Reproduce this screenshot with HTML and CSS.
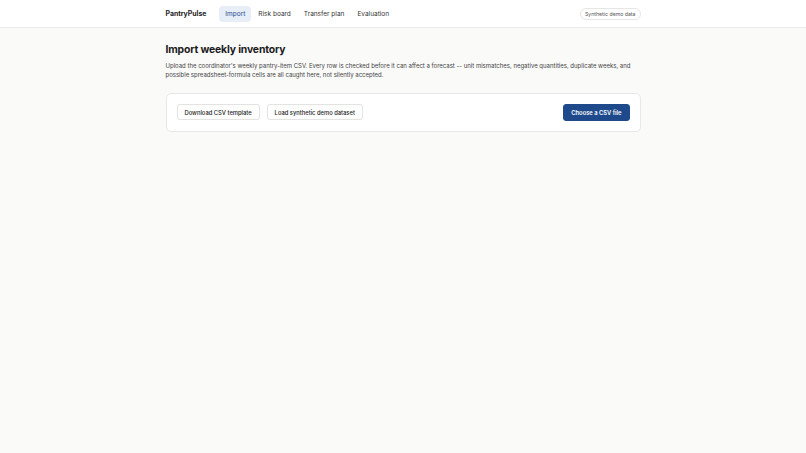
FILE: index.html
```html
<!DOCTYPE html>
<html lang="en">
<head>
    <meta charset="UTF-8">
    <meta name="viewport" content="width=device-width, initial-scale=1.0">
    <title>PantryPulse - Import</title>
    <link rel="stylesheet" href="styles.css">
</head>
<body>
<header class="topbar">
    <div class="topbar-inner">
        <div class="brand">PantryPulse</div>
        <nav class="nav">
            <a class="nav-link active" href="#">Import</a>
            <a class="nav-link" href="#">Risk board</a>
            <a class="nav-link" href="#">Transfer plan</a>
            <a class="nav-link" href="#">Evaluation</a>
        </nav>
        <span class="badge">Synthetic demo data</span>
    </div>
</header>

<main class="container">
    <h1 class="title">Import weekly inventory</h1>
    <p class="lead">Upload the coordinator's weekly pantry-item CSV. Every row is checked before it can affect a forecast -- unit mismatches, negative quantities, duplicate weeks, and possible spreadsheet-formula cells are all caught here, not silently accepted.</p>

    <div class="card">
        <div class="card-actions">
            <button class="btn">Download CSV template</button>
            <button class="btn">Load synthetic demo dataset</button>
        </div>
        <button class="btn btn-primary">Choose a CSV file</button>
    </div>
</main>
</body>
</html>
```

FILE: styles.css
```css
body {
    font-family: Inter, "Noto Sans", sans-serif;
    margin: 0;
    padding: 0;
    background-color: #fafaf9;
    color: #1c1c1c;
}

.topbar {
    background: #fff;
    border-bottom: 1px solid #ebebea;
}

.topbar-inner {
    width: 475px;
    margin: 0 auto;
    height: 27px;
    display: flex;
    align-items: center;
}

.brand {
    font-weight: 700;
    font-size: 6.9px;
    margin-right: 13px;
}

.nav {
    display: flex;
    gap: 1px;
}

.nav-link {
    font-size: 6.5px;
    color: #333;
    text-decoration: none;
    padding: 4px 6px;
    border-radius: 4px;
    line-height: 8px;
}

.nav-link.active {
    background: #e8eef8;
    color: #1e4a8c;
}

.badge {
    margin-left: auto;
    font-size: 5.2px;
    color: #555;
    border: 1px solid #e6e6e4;
    border-radius: 8px;
    padding: 2px 4px;
    background: #fff;
}

.container {
    width: 475px;
    margin: 0 auto;
    padding-top: 15px;
}

.title {
    font-size: 10.4px;
    font-weight: 700;
    margin: 0 0 5px 0;
    letter-spacing: -0.15px;
}

.lead {
    font-size: 6px;
    line-height: 9.3px;
    color: #444;
    margin: 0 0 13px 0;
}

.card {
    background: #fff;
    border: 1px solid #e8e8e6;
    border-radius: 5px;
    padding: 10px 10px;
    display: flex;
    align-items: center;
    justify-content: space-between;
}

.card-actions {
    display: flex;
    gap: 7px;
}

.btn {
    font-family: inherit;
    font-size: 5.8px;
    font-weight: 500;
    color: #222;
    background: #fff;
    border: 1px solid #e3e3e1;
    border-radius: 3px;
    padding: 3px 7px;
    height: 16px;
    cursor: pointer;
}

.btn-primary {
    background: #1e4a8c;
    border-color: #1e4a8c;
    color: #fff;
    font-weight: 600;
    height: 17px;
}
```
